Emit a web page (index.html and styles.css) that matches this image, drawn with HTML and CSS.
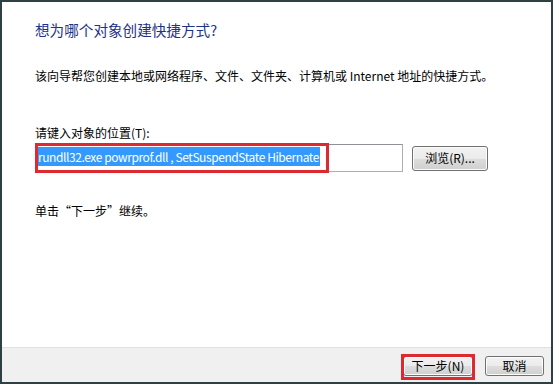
FILE: index.html
```html
<!DOCTYPE html>
<html lang="zh-CN">
<head>
<meta charset="utf-8">
<title>创建快捷方式</title>
<link rel="stylesheet" href="styles.css">
</head>
<body>
<div class="window">
  <div class="main">
    <h1 class="title">想为哪个对象创建快捷方式?</h1>
    <p class="desc">该向导帮您创建本地或网络程序、文件、文件夹、计算机或 Internet 地址的快捷方式。</p>
    <label class="label">请键入对象的位置(T):</label>
    <div class="row">
      <div class="input">
        <span class="sel">rundll32.exe powrprof.dll , SetSuspendState Hibernate</span>
        <div class="mark mark-input"></div>
      </div>
      <button class="btn btn-browse">浏览(R)...</button>
    </div>
    <p class="hint">单击“下一步”继续。</p>
  </div>
  <div class="footer">
    <div class="next-wrap">
      <button class="btn btn-next">下一步(N)</button>
      <div class="mark mark-next"></div>
    </div>
    <button class="btn btn-cancel">取消</button>
  </div>
</div>
</body>
</html>
```

FILE: styles.css
```css
* { box-sizing: border-box; }
html, body { margin: 0; padding: 0; background: #ffffff; }
body {
  width: 555px;
  height: 385px;
  font-family: "Noto Sans CJK SC", "Noto Sans", sans-serif;
  font-size: 12px;
  color: #000;
}
.window {
  width: 553px;
  height: 384px;
  border: 2px solid #2f4045;
  display: flex;
  flex-direction: column;
  background: #fff;
}
.main {
  flex: 1;
  padding: 18px 0 0 33px;
  display: flex;
  flex-direction: column;
  align-items: flex-start;
}
.title {
  margin: 0;
  font-size: 14.6px;
  line-height: 20px;
  font-weight: normal;
  color: #1e3287;
}
.desc {
  margin: 28px 0 0 0;
  line-height: 16px;
}
.label {
  margin-top: 41px;
  line-height: 16px;
}
.row {
  margin-top: 3px;
  display: flex;
  align-items: center;
  gap: 9px;
}
.input {
  position: relative;
  width: 368px;
  height: 28px;
  border: 1px solid #abadb3;
  border-top-color: #8e9296;
  padding: 2px 0 0 1px;
  display: flex;
  align-items: flex-start;
}
.sel {
  background: #3399ff;
  color: #fff;
  line-height: 19px;
  padding: 0 1px;
  white-space: nowrap;
  letter-spacing: -0.42px;
}
.mark {
  position: absolute;
  border: 3px solid #dc2a30;
  pointer-events: none;
}
.mark-input {
  left: -1px;
  top: -2px;
  width: 294px;
  height: 30px;
}
.btn {
  font-family: "Noto Sans CJK SC", "Noto Sans", sans-serif;
  font-size: 12px;
  color: #000;
  border: 1px solid #707070;
  border-radius: 3px;
  background: linear-gradient(#f2f2f2 0%, #ebebeb 50%, #dddddd 51%, #cfcfcf 100%);
  box-shadow: inset 0 0 0 1px #fcfcfc;
  padding: 0;
  line-height: 16px;
}
.btn-browse {
  width: 76px;
  height: 25px;
}
.hint {
  margin: 31px 0 0 0;
  line-height: 16px;
}
.footer {
  height: 35px;
  border-top: 1px solid #dfdfdf;
  background: #f0f0f0;
  display: flex;
  justify-content: flex-end;
  align-items: flex-start;
  padding: 8px 7px 0 0;
  gap: 12px;
}
.next-wrap {
  position: relative;
}
.btn-next {
  width: 70px;
  height: 20px;
}
.btn-cancel {
  width: 59px;
  height: 20px;
}
.mark-next {
  left: -2px;
  top: -2px;
  width: 74px;
  height: 26px;
}
```
